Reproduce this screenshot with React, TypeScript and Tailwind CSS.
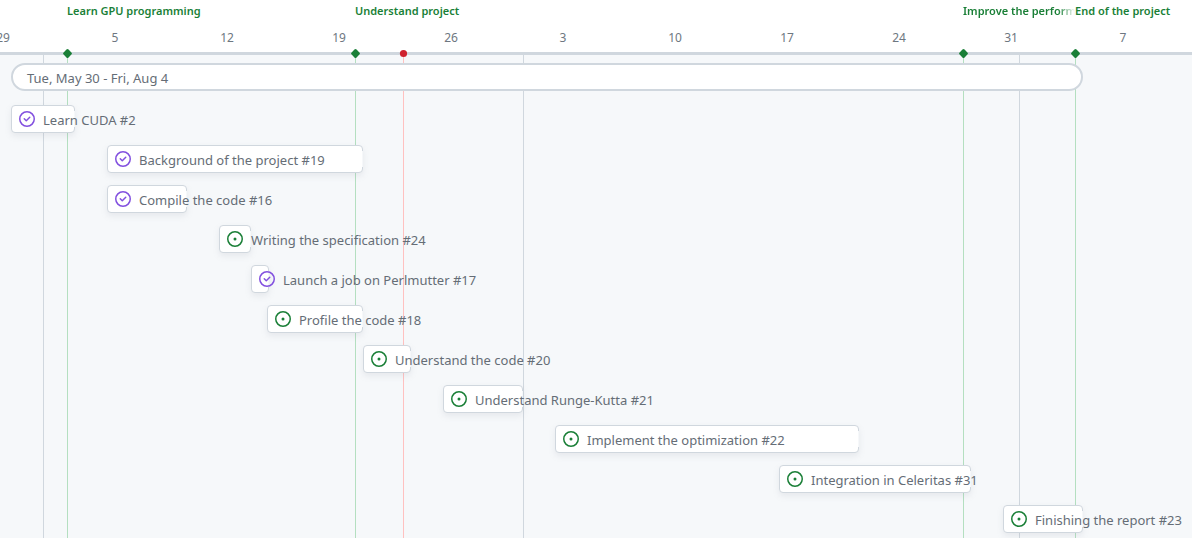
import type { ReactNode } from 'react';

const DAY = 16;

type Task = { title: string; number: number; start: number; days: number; closed?: boolean };

// Day offsets count from Monday, May 29.
const tasks: Task[] = [
  { title: 'Learn CUDA', number: 2, start: 1, days: 4, closed: true },
  { title: 'Background of the project', number: 19, start: 7, days: 16, closed: true },
  { title: 'Compile the code', number: 16, start: 7, days: 5, closed: true },
  { title: 'Writing the specification', number: 24, start: 14, days: 2 },
  { title: 'Launch a job on Perlmutter', number: 17, start: 16, days: 1, closed: true },
  { title: 'Profile the code', number: 18, start: 17, days: 6 },
  { title: 'Understand the code', number: 20, start: 23, days: 3 },
  { title: 'Understand Runge-Kutta', number: 21, start: 28, days: 5 },
  { title: 'Implement the optimization', number: 22, start: 35, days: 19 },
  { title: 'Integration in Celeritas', number: 31, start: 49, days: 12 },
  { title: 'Finishing the report', number: 23, start: 63, days: 5 },
];

const milestones = [
  { label: 'Learn GPU programming', day: 4.5, span: 18 },
  { label: 'Understand project', day: 22.5, span: 18 },
  { label: 'Improve the performance', day: 60.5, span: 7, faded: true },
  { label: 'End of the project', day: 67.5, span: 12 },
];

const weeks = [29, 5, 12, 19, 26, 3, 10, 17, 24, 31, 7];
const monthStarts = [3, 33, 64];
const today = 25.5;

function Icon({ closed }: { closed?: boolean }) {
  return (
    <svg
      viewBox="0 0 16 16"
      aria-hidden="true"
      className={closed ? 'relative size-4 shrink-0 fill-[#8250df]' : 'relative size-4 shrink-0 fill-[#1a7f37]'}
    >
      {closed ? (
        <>
          <path d="M11.28 6.78a.75.75 0 0 0-1.06-1.06L7.25 8.69 5.78 7.22a.75.75 0 0 0-1.06 1.06l2 2a.75.75 0 0 0 1.06 0l3.5-3.5Z" />
          <path d="M16 8A8 8 0 1 1 0 8a8 8 0 0 1 16 0Zm-1.5 0a6.5 6.5 0 1 0-13 0 6.5 6.5 0 0 0 13 0Z" />
        </>
      ) : (
        <>
          <path d="M8 9.5a1.5 1.5 0 1 0 0-3 1.5 1.5 0 0 0 0 3Z" />
          <path d="M8 0a8 8 0 1 1 0 16A8 8 0 0 1 8 0ZM1.5 8a6.5 6.5 0 1 0 13 0 6.5 6.5 0 0 0-13 0Z" />
        </>
      )}
    </svg>
  );
}

function Line({ day, className }: { day: number; className: string }) {
  return <div className={`absolute inset-y-0 w-px ${className}`} style={{ left: day * DAY }} />;
}

function Marker({ day, children }: { day: number; children: ReactNode }) {
  return (
    <svg
      viewBox="0 0 9 9"
      aria-hidden="true"
      className="absolute -bottom-[6px] z-10 -ml-1 size-[9px]"
      style={{ left: day * DAY }}
    >
      {children}
    </svg>
  );
}

export default function App() {
  return (
    <main className="flex min-h-screen flex-col overflow-hidden bg-[#f6f8fa] font-['Noto_Sans','Open_Sans',sans-serif] text-[#656d76]">
      <header className="border-b-[3px] border-[#d0d7de] bg-white">
        <div className="relative -ml-[5px] h-[52px]">
          <div className="grid h-[22px] grid-cols-[repeat(160,8px)] items-center">
            {milestones.map((m) => (
              <div
                key={m.label}
                className={
                  m.faded
                    ? 'row-start-1 overflow-hidden whitespace-nowrap text-[11px] leading-[22px] font-semibold text-[#1a7f37] [mask-image:linear-gradient(to_right,black_85%,transparent)]'
                    : 'row-start-1 whitespace-nowrap text-[11px] leading-[22px] font-semibold text-[#1a7f37]'
                }
                style={{ gridColumn: `${m.day * 2 + 1} / span ${m.span * 2}` }}
              >
                {m.label}
              </div>
            ))}
          </div>
          <div className="flex pt-[6px]">
            {weeks.map((w, i) => (
              <div key={i} className="w-28 shrink-0">
                <div className="flex w-4 justify-center text-[12px] leading-5 text-[#6e7781]">{w}</div>
              </div>
            ))}
          </div>
          {milestones.map((m) => (
            <Marker key={m.label} day={m.day}>
              <rect x="1" y="1" width="7" height="7" rx="1.5" transform="rotate(45 4.5 4.5)" fill="#1a7f37" />
            </Marker>
          ))}
          <Marker day={today}>
            <circle cx="4.5" cy="4.5" r="3.6" fill="#cf222e" />
          </Marker>
        </div>
      </header>

      <section className="relative -ml-[5px] flex-1 pt-2">
        {monthStarts.map((d) => (
          <Line key={d} day={d} className="bg-[#d0d7de]" />
        ))}
        {milestones.map((m) => (
          <Line key={m.label} day={m.day} className="bg-[#b4dfc0]" />
        ))}
        <Line day={today} className="bg-[#ffc1c0]" />

        <div className="relative grid auto-rows-[28px] grid-cols-[repeat(80,16px)]">
          <div className="col-start-2 col-end-69 flex items-center rounded-full border-2 border-[#d0d7de] bg-white px-[14px] pt-0.5 text-[13px] leading-5">
            Tue, May 30 - Fri, Aug 4
          </div>
        </div>

        <ul className="relative mt-[14px] flex flex-col gap-3">
          {tasks.map((t) => (
            <li key={t.number} className="grid auto-rows-[28px] grid-cols-[repeat(80,16px)]">
              <div
                className="relative flex min-w-[18px] items-center gap-2 rounded border border-[#d0d7de] bg-white pl-[7px] text-[13px] leading-5 whitespace-nowrap shadow-[0_3px_6px_rgba(140,149,159,0.15)]"
                style={{ gridColumn: `${t.start + 1} / span ${t.days}` }}
              >
                <span className="absolute inset-y-[5px] -right-px w-px bg-[#f6f8fa]" />
                <Icon closed={t.closed} />
                <span className="relative pt-0.5">
                  {t.title} #{t.number}
                </span>
              </div>
            </li>
          ))}
        </ul>
      </section>
    </main>
  );
}
